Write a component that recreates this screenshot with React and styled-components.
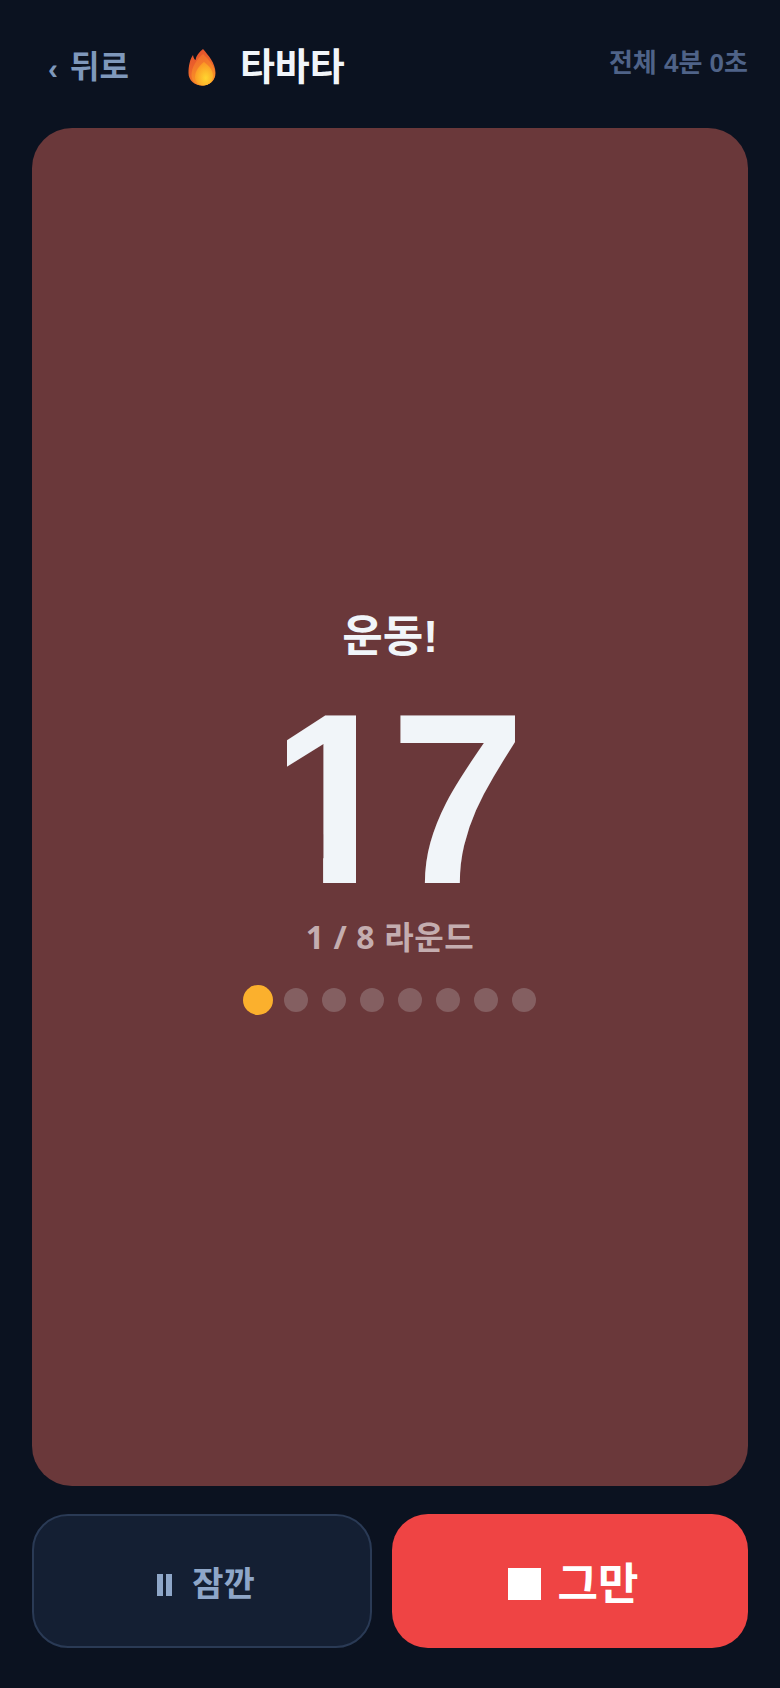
import React from 'react';
import styled, { createGlobalStyle } from 'styled-components';

const CJK = '"Noto Sans CJK KR"';

const Global = createGlobalStyle`
  html, body { margin: 0; padding: 0; background: #0b1220; }
  body { font-family: "Liberation Sans", ${CJK}, sans-serif; }
  * { box-sizing: border-box; }
`;

const Screen = styled.div`
  width: 780px;
  height: 1688px;
  background: #0b1220;
  display: flex;
  flex-direction: column;
  padding: 32px 32px 40px;
`;

const Header = styled.header`
  height: 64px;
  margin-bottom: 32px;
  padding-top: 6px;
  display: flex;
  align-items: center;
  justify-content: space-between;
`;

const HeaderLeft = styled.div`
  display: flex;
  align-items: center;
  gap: 59px;
  padding-left: 16px;
`;

const BackLink = styled.div`
  display: flex;
  align-items: center;
  gap: 12px;
  font-size: 32px;
  font-weight: 700;
  color: #7f98bb;
  line-height: 1;
`;

const Chevron = styled.span`
  font-size: 30px;
  color: #7f98bb;
  margin-top: 3px;
`;

const Title = styled.div`
  display: flex;
  align-items: center;
  gap: 24px;
  font-size: 38px;
  font-weight: 700;
  color: #f1f5f9;
  line-height: 1;
`;

const TotalTime = styled.div`
  font-size: 26px;
  font-weight: 700;
  color: #4f6388;
  align-self: flex-start;
  margin-top: 4px;
`;

const PhaseCard = styled.main`
  flex: 1;
  border-radius: 40px;
  padding-top: 9px;
  background: #6a383a;
  display: flex;
  flex-direction: column;
  align-items: center;
  justify-content: center;
`;

const PhaseLabel = styled.div`
  font-size: 44px;
  font-weight: 700;
  color: #f1f5f9;
  line-height: 1.2;
  margin-bottom: 20.5px;
`;

const Count = styled.div`
  font-size: 244px;
  font-weight: 700;
  color: #f1f5f9;
  line-height: 230px;
  letter-spacing: -4px;
`;

const CountOne = styled.span`
  display: inline-block;
  transform: translateX(8.2px);
  clip-path: polygon(20.5px -20px, 89.5px -20px, 89.5px 200px, 56.6px 200px, 56.6px 150px, 20.5px 150px);
`;

const RoundLabel = styled.div`
  font-family: "Noto Sans", ${CJK}, sans-serif;
  font-size: 32px;
  font-weight: 700;
  color: #c4adaf;
  line-height: 1.2;
  letter-spacing: 0.6px;
  margin-top: 3.2px;
`;

const Dots = styled.div`
  display: flex;
  align-items: center;
  gap: 14px;
  margin-top: 32px;
  margin-left: 2px;
`;

const Dot = styled.span`
  width: 24px;
  height: 24px;
  border-radius: 50%;
  background: ${p => (p.$active ? '#fbb02d' : '#845f61')};
  transform: scale(${p => (p.$active ? 1.25 : 1)});
`;

const Actions = styled.div`
  display: grid;
  grid-template-columns: 340fr 356fr;
  gap: 20px;
  margin-top: 28px;
  height: 134px;
`;

const PauseButton = styled.button`
  border: 2px solid #2a3a55;
  border-radius: 36px;
  background: #141f33;
  color: #8ea6c8;
  padding: 0 0 0 8px;
  font: 700 34px "Liberation Sans", ${CJK}, sans-serif;
  display: flex;
  align-items: center;
  justify-content: center;
  gap: 19px;
`;

const StopButton = styled.button`
  border: none;
  border-radius: 36px;
  background: #ef4444;
  color: #fff;
  padding: 0 0 0 6px;
  font: 700 44px "Liberation Sans", ${CJK}, sans-serif;
  display: flex;
  align-items: center;
  justify-content: center;
  gap: 17px;
`;

const PauseIcon = styled.svg`
  width: 16px;
  height: 22px;
  flex: none;
  margin-top: 8px;
`;

const StopIcon = styled.span`
  width: 33px;
  height: 32px;
  background: #fff;
  flex: none;
  margin-top: 6px;
`;

const FlameIcon = styled.svg`
  width: 28px;
  height: 37px;
  flex: none;
`;

const Flame = () => (
  <FlameIcon viewBox="0 0 28 37">
    <defs>
      <linearGradient id="outer" x1="0.2" y1="0" x2="0.5" y2="1">
        <stop offset="0" stopColor="#e4502c" />
        <stop offset="1" stopColor="#f3772a" />
      </linearGradient>
      <linearGradient id="mid" x1="0.3" y1="0" x2="0.6" y2="1">
        <stop offset="0" stopColor="#f06a2c" />
        <stop offset="1" stopColor="#fb9a25" />
      </linearGradient>
      <radialGradient id="inner" cx="0.6" cy="0.68" r="0.62">
        <stop offset="0" stopColor="#ffd530" />
        <stop offset="1" stopColor="#fb9a25" />
      </radialGradient>
    </defs>
    <path d="M15 0C20 6 27.5 14 27.5 24C27.5 31.5 21.5 36.5 14 36.5C6.5 36.5 .5 31.5 .5 24C.5 17 2 10 5 6C5.5 9 6.5 10.5 7.5 11C8 7 11 3 15 0Z" fill="url(#outer)" />
    <path d="M15 5C20 10 27 17 27 25C27 32 21 36.5 14 36.5C8 36.5 3.5 32 3.5 26C3.5 18 9 10 15 5Z" fill="url(#mid)" />
    <path d="M16 13C21 17 25 21 25 27C25 32 21 36.5 15.5 36.5C10.5 36.5 7 32.5 7 28C7 22 11 17 16 13Z" fill="url(#inner)" />
  </FlameIcon>
);

export default function App() {
  return (
    <>
      <Global />
      <Screen>
        <Header>
          <HeaderLeft>
            <BackLink><Chevron>‹</Chevron>뒤로</BackLink>
            <Title><Flame />타바타</Title>
          </HeaderLeft>
          <TotalTime>전체 4분 0초</TotalTime>
        </Header>
        <PhaseCard>
          <PhaseLabel>운동!</PhaseLabel>
          <Count><CountOne>1</CountOne>7</Count>
          <RoundLabel>1 / 8 라운드</RoundLabel>
          <Dots>
            {Array.from({ length: 8 }, (_, i) => <Dot key={i} $active={i === 0} />)}
          </Dots>
        </PhaseCard>
        <Actions>
          <PauseButton>
            <PauseIcon viewBox="0 0 16 22"><rect x="0" width="6" height="22" fill="#8ea6c8" /><rect x="9" width="6" height="22" fill="#8ea6c8" /></PauseIcon>
            잠깐
          </PauseButton>
          <StopButton><StopIcon />그만</StopButton>
        </Actions>
      </Screen>
    </>
  );
}
